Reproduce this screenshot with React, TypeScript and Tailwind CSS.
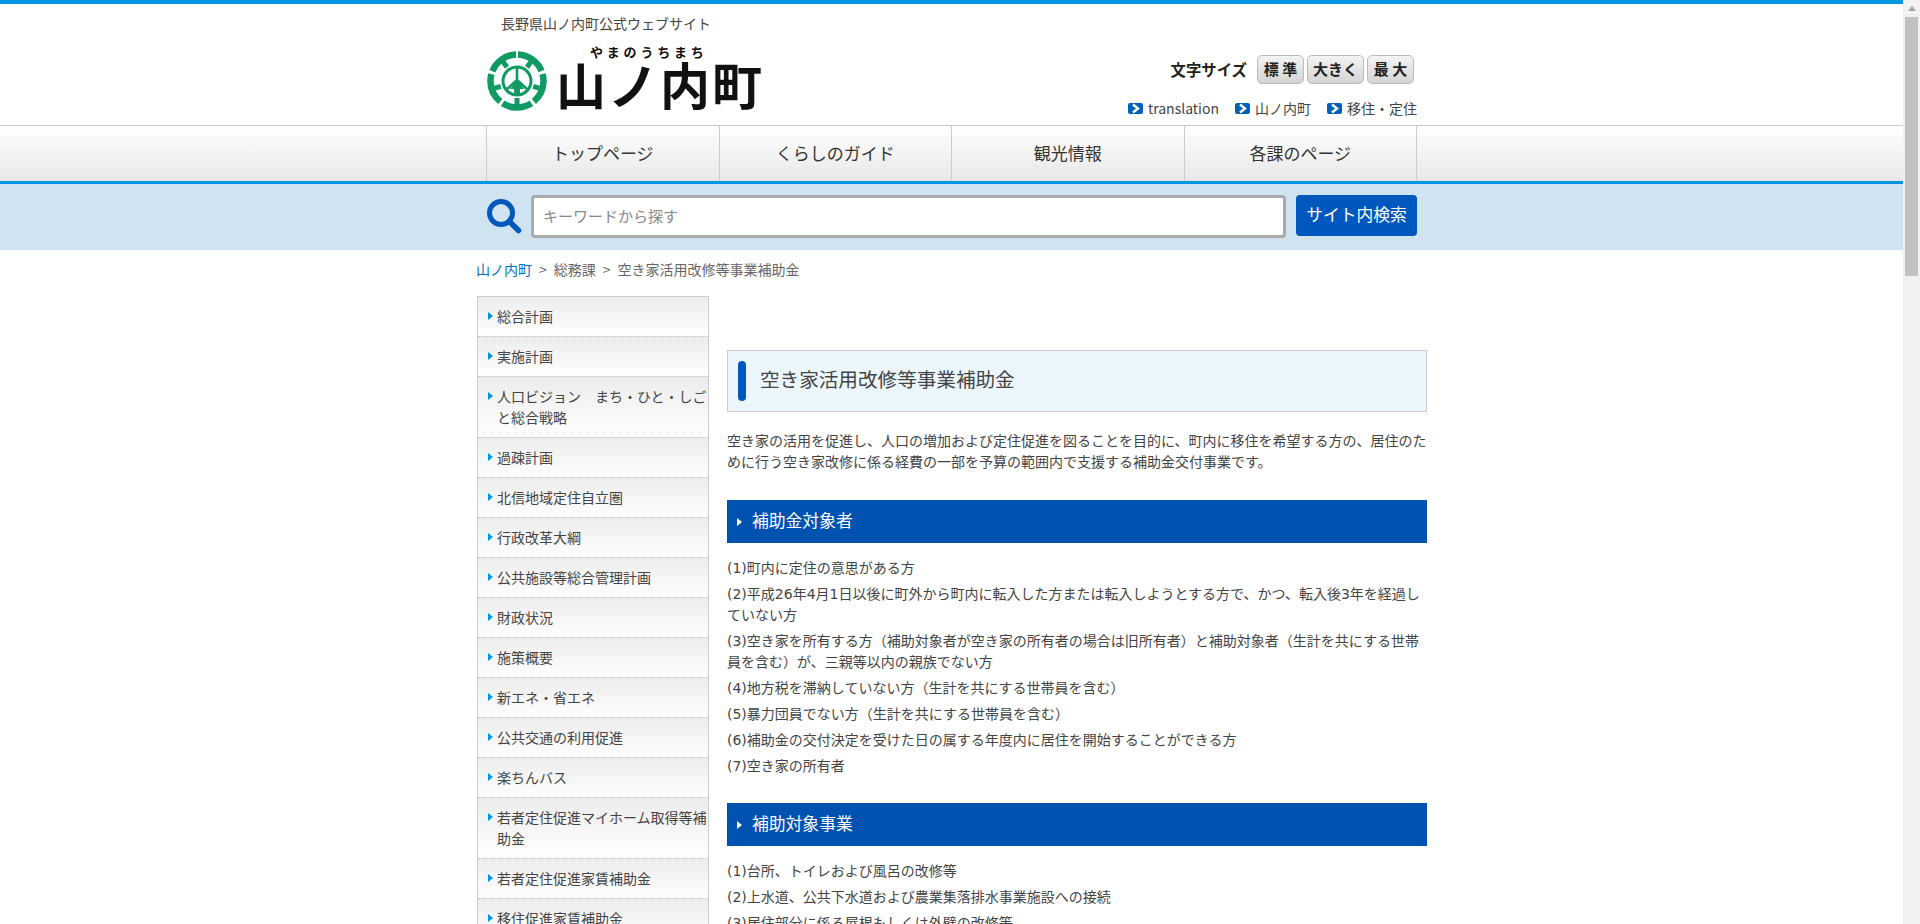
const sideItems = [
  "総合計画",
  "実施計画",
  "人口ビジョン　まち・ひと・しごと総合戦略",
  "過疎計画",
  "北信地域定住自立圏",
  "行政改革大綱",
  "公共施設等総合管理計画",
  "財政状況",
  "施策概要",
  "新エネ・省エネ",
  "公共交通の利用促進",
  "楽ちんバス",
  "若者定住促進マイホーム取得等補助金",
  "若者定住促進家賃補助金",
  "移住促進家賃補助金",
];

const targets = [
  "(1)町内に定住の意思がある方",
  "(2)平成26年4月1日以後に町外から町内に転入した方または転入しようとする方で、かつ、転入後3年を経過していない方",
  "(3)空き家を所有する方（補助対象者が空き家の所有者の場合は旧所有者）と補助対象者（生計を共にする世帯員を含む）が、三親等以内の親族でない方",
  "(4)地方税を滞納していない方（生計を共にする世帯員を含む）",
  "(5)暴力団員でない方（生計を共にする世帯員を含む）",
  "(6)補助金の交付決定を受けた日の属する年度内に居住を開始することができる方",
  "(7)空き家の所有者",
];

const works = [
  "(1)台所、トイレおよび風呂の改修等",
  "(2)上水道、公共下水道および農業集落排水事業施設への接続",
  "(3)居住部分に係る屋根もしくは外壁の改修等",
];

function Emblem() {
  return (
    <svg width="60" height="60" viewBox="0 0 60 60" className="shrink-0">
      <g fill="none" stroke="#0f9a63">
        <circle cx="30" cy="30" r="26.5" strokeWidth="6.5" strokeDasharray="30.3 3" transform="rotate(-88 30 30)" />
        <circle cx="30" cy="30" r="14" strokeWidth="3" />
        <path d="M30 16v13M30 29L19 39M30 29l11 10" strokeWidth="2.6" />
      </g>
      <g fill="#0f9a63">
        <path d="M30 29l7 9h-4v6h-6v-6h-4z" />
        {[36, 108, 180, 252, 324].map((deg) => (
          <rect key={deg} x="27.5" y="6" width="5" height="7" transform={`rotate(${deg} 30 30)`} />
        ))}
      </g>
    </svg>
  );
}

function Chip() {
  return (
    <svg width="15" height="11" viewBox="0 0 15 11" className="mr-[5px] shrink-0">
      <rect width="15" height="11" rx="2" fill="#0060b8" />
      <path d="M5 1.5L10 5.5L5 9.5" fill="none" stroke="#fff" strokeWidth="2.4" />
    </svg>
  );
}

function SizeButton({ label, width }: { label: string; width: string }) {
  return (
    <span
      className={`flex h-[29px] items-center justify-center rounded-[5px] border border-[#bbb] bg-gradient-to-b from-[#f4f4f4] to-[#d4d4d4] pb-[2px] text-[15px] font-bold text-[#222] ${width}`}
    >
      {label}
    </span>
  );
}

function SectionHead({ children }: { children: string }) {
  return (
    <h2 className="flex h-[43px] items-center bg-[#0052b0] pl-[10px] text-[16.8px] text-white">
      <span className="mr-[10px] h-0 w-0 border-y-[4px] border-l-[5px] border-y-transparent border-l-white" />
      {children}
    </h2>
  );
}

export default function App() {
  return (
    <div className="flex h-[924px] overflow-hidden bg-white font-['Noto_Sans_CJK_JP',sans-serif] text-[14px] leading-[21px] text-[#444]">
      <div className="w-[1903px] shrink-0">
        <div className="h-[4px] bg-[#0095e0]" />

        <header className="mx-auto flex h-[121px] w-[951px] justify-between">
          <div className="pl-[11px]">
            <p className="pl-[14px] pt-[9px] text-[#444]">長野県山ノ内町公式ウェブサイト</p>
            <div className="mt-[17px] flex items-end">
              <Emblem />
              <div className="relative ml-[9px]">
                <span className="absolute left-[34px] top-[-11px] text-[13px] leading-[16px] font-bold tracking-[3.8px] whitespace-nowrap text-[#111]">
                  やまのうちまち
                </span>
                <span className="block text-[50px] leading-[56px] font-bold tracking-[2px] whitespace-nowrap text-[#111]">
                  山ノ内町
                </span>
              </div>
            </div>
          </div>
          <div className="flex flex-col items-end pr-[10px] pt-[51px]">
            <div className="mr-[3px] flex items-center">
              <span className="mr-[10px] text-[15.4px] font-bold text-[#222]">文字サイズ</span>
              <div className="flex gap-[3px]">
                <SizeButton label="標 準" width="w-[47px]" />
                <SizeButton label="大きく" width="w-[57px]" />
                <SizeButton label="最 大" width="w-[47px]" />
              </div>
            </div>
            <div className="mt-[14px] flex items-center">
              <Chip />
              <span className="mr-[16px]">translation</span>
              <Chip />
              <span className="mr-[16px]">山ノ内町</span>
              <Chip />
              <span>移住・定住</span>
            </div>
          </div>
        </header>

        <nav className="h-[56px] border-t border-[#ccc] bg-gradient-to-b from-white to-[#e8e8e8]">
          <ul className="mx-auto flex h-full w-[951px] pl-[10px]">
            {["トップページ", "くらしのガイド", "観光情報", "各課のページ"].map((label) => (
              <li
                key={label}
                className="flex w-[232.5px] items-center justify-center border-l border-[#ccc] pb-[2px] text-[17px] text-[#333] last:w-[233.5px] last:border-r"
              >
                {label}
              </li>
            ))}
          </ul>
        </nav>

        <div className="h-[69px] border-t-[3px] border-[#0095e0] bg-[#cfe3f0]">
          <div className="mx-auto flex w-[951px] items-start pl-[10px] pt-[11px]">
            <svg width="36" height="36" viewBox="0 0 36 36" className="mt-[3px] shrink-0">
              <circle cx="15" cy="15" r="11.5" fill="none" stroke="#0058bf" strokeWidth="5" />
              <path d="M23.5 23.5L32.5 32.5" stroke="#0058bf" strokeWidth="5.5" strokeLinecap="round" />
            </svg>
            <div className="ml-[9px] flex h-[43px] w-[755px] items-center rounded-[4px] border-[3px] border-[#aaa] bg-white pb-[2px] pl-[9px] text-[15px] text-[#888]">
              キーワードから探す
            </div>
            <button className="ml-[10px] h-[41px] w-[121px] rounded-[4px] bg-[#0058bf] pb-[2px] text-[16.8px] text-white">
              サイト内検索
            </button>
          </div>
        </div>

        <div className="mx-auto w-[951px]">
          <p className="pt-[9px] text-[#666]">
            <span className="text-[#0070c0]">山ノ内町</span>
            <span className="mx-[7px]">&gt;</span>総務課
            <span className="mx-[7px]">&gt;</span>空き家活用改修等事業補助金
          </p>

          <div className="mt-[16px] flex items-start">
            <ul className="ml-[1px] w-[232px] shrink-0 border-x border-t border-[#ccc]">
              {sideItems.map((item) => (
                <li
                  key={item}
                  className="relative border-b border-dotted border-[#c4c4c4] bg-gradient-to-b from-[#ececec] to-white py-[9px] pl-[19px]"
                >
                  <span className="absolute left-[10px] top-[15px] h-0 w-0 border-y-[4px] border-l-[5px] border-y-transparent border-l-[#0095e0]" />
                  {item}
                </li>
              ))}
            </ul>

            <main className="ml-[18px] w-[700px] shrink-0 pt-[54px] font-['DejaVu_Sans','Noto_Sans_CJK_JP',sans-serif]">
              <h1 className="flex h-[62px] items-center border border-[#ccc] bg-[#ecf7fd] pb-[1px] pl-[10px] text-[19.6px] text-[#444]">
                <span className="mr-[14px] h-[40px] w-[8px] rounded-full bg-[#0058bf]" />
                空き家活用改修等事業補助金
              </h1>
              <p className="mt-[19px] mb-[27px]">
                空き家の活用を促進し、人口の増加および定住促進を図ることを目的に、町内に移住を希望する方の、居住のために行う空き家改修に係る経費の一部を予算の範囲内で支援する補助金交付事業です。
              </p>
              <SectionHead>補助金対象者</SectionHead>
              <ul className="mt-[15px] mb-[26px]">
                {targets.map((t) => (
                  <li key={t} className="mb-[5px]">
                    {t}
                  </li>
                ))}
              </ul>
              <SectionHead>補助対象事業</SectionHead>
              <ul className="mt-[15px]">
                {works.map((t) => (
                  <li key={t} className="mb-[5px]">
                    {t}
                  </li>
                ))}
              </ul>
            </main>
          </div>
        </div>
      </div>

      {/* page scrollbar */}
      <div className="flex w-[17px] shrink-0 flex-col items-center bg-[#f1f1f1]">
        <div className="mt-[6px] h-0 w-0 border-x-[4px] border-b-[5px] border-x-transparent border-b-[#a3a3a3]" />
        <div className="mt-[6px] h-[259px] w-[13px] bg-[#c1c1c1]" />
      </div>
    </div>
  );
}
